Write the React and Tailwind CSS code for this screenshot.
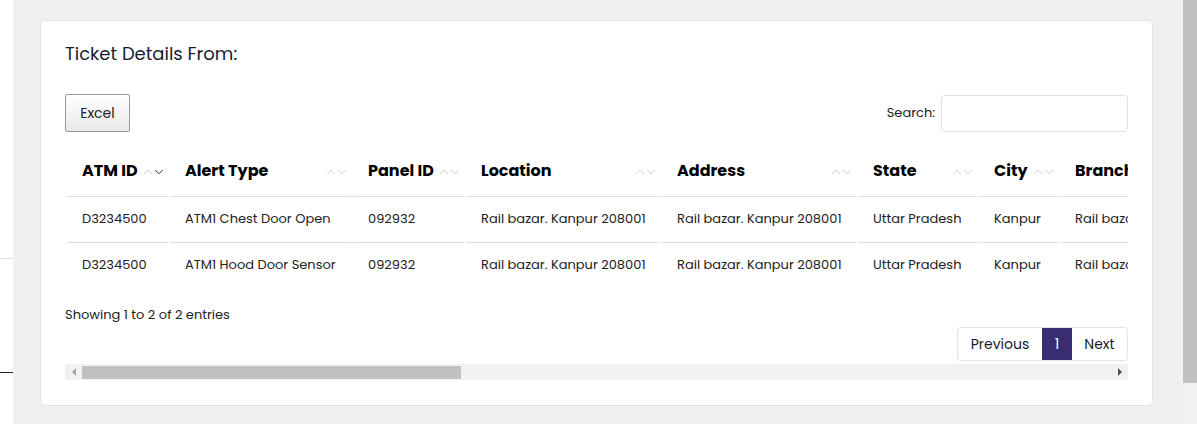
import { ChevronUp, ChevronDown } from 'lucide-react';

const columns = [
  { label: 'ATM ID', width: 'w-[101px]', active: true },
  { label: 'Alert Type', width: 'w-[181px]' },
  { label: 'Panel ID', width: 'w-[111px]' },
  { label: 'Location', width: 'w-[194px]' },
  { label: 'Address', width: 'w-[194px]' },
  { label: 'State', width: 'w-[119px]' },
  { label: 'City', width: 'w-[79px]' },
  { label: 'Branch', width: 'w-[200px]' },
];

const rows = [
  ['D3234500', 'ATM1 Chest Door Open', '092932', 'Rail bazar. Kanpur 208001', 'Rail bazar. Kanpur 208001', 'Uttar Pradesh', 'Kanpur', 'Rail bazar. Kanpur 208001'],
  ['D3234500', 'ATM1 Hood Door Sensor', '092932', 'Rail bazar. Kanpur 208001', 'Rail bazar. Kanpur 208001', 'Uttar Pradesh', 'Kanpur', 'Rail bazar. Kanpur 208001'],
];

const SortIcon = ({ active }) => (
  <span className="absolute right-[2px] top-[15px] flex items-center">
    <ChevronUp className="h-[14px] w-[14px] text-[#c8c8c8]" strokeWidth={1.6} />
    <ChevronDown
      className={`-ml-[3px] h-[14px] w-[14px] ${active ? 'text-[#222]' : 'text-[#c8c8c8]'}`}
      strokeWidth={1.6}
    />
  </span>
);

const App = () => {
  return (
    <div
      className="flex h-[424px] w-[1197px] overflow-hidden bg-[#f0f0f0] text-[#1a1a2e]"
      style={{ fontFamily: 'Poppins, "Open Sans", sans-serif' }}
    >
      {/* Sidebar edge */}
      <div className="flex w-[13px] shrink-0 flex-col bg-white">
        <div className="h-[258px]" />
        <div className="h-px bg-[#e0def0]" />
        <div className="h-[113px]" />
        <div className="h-px bg-[#1e1e3c]" />
      </div>

      {/* Main content */}
      <main className="min-w-0 flex-1 pl-[27px] pr-[30px] pt-[20px]">
        <div className="rounded-[5px] border border-[#e3e1ef] bg-white px-6 pb-[25px] pt-[19px]">
          <h2 className="text-[18px] leading-[28px] text-[#1a1a2e]">Ticket Details From:</h2>

          <div className="mt-[26px] flex items-center justify-between">
            <button className="h-[38px] w-[65px] rounded-[2px] border border-[#999] bg-gradient-to-b from-white to-[#e9e9e9] text-[14px] text-[#222]">
              Excel
            </button>
            <label className="flex items-center gap-[6px] text-[13px] text-[#222]">
              Search:
              <input className="h-[37px] w-[187px] rounded-[4px] border border-[#e0def0] outline-none" />
            </label>
          </div>

          {/* Scroll area */}
          <div className="mt-[18px] overflow-hidden">
            <table className="w-[1197px] table-fixed border-separate border-spacing-x-[2px] border-spacing-y-0">
              <thead>
                <tr>
                  {columns.map((c) => (
                    <th
                      key={c.label}
                      className={`relative ${c.width} whitespace-nowrap border-b border-[#dcdaf0] pb-[13px] pl-[15px] pt-[9px] text-left align-top text-[16px] font-bold leading-[24px] text-black`}
                    >
                      {c.label}
                      {c.label !== 'Branch' && <SortIcon active={c.active} />}
                    </th>
                  ))}
                </tr>
              </thead>
              <tbody>
                {rows.map((r, i) => (
                  <tr key={i}>
                    {r.map((cell, j) => (
                      <td
                        key={j}
                        className={`overflow-hidden whitespace-nowrap pb-[13px] pl-[15px] pt-[11px] text-[13px] leading-[21px] text-[#222] ${
                          i === 0 ? 'border-b border-[#dcdaf0]' : ''
                        }`}
                      >
                        {cell}
                      </td>
                    ))}
                  </tr>
                ))}
              </tbody>
            </table>

            <div className="mt-[17px] text-[13px] leading-[20px] text-[#222]">Showing 1 to 2 of 2 entries</div>

            <div className="mt-[2px] flex justify-end">
              <div className="flex h-[34px] overflow-hidden rounded-[4px] border border-[#e3e1ef] text-[14px] text-[#1a1a2e]">
                <button className="w-[84px]">Previous</button>
                <button className="w-[30px] bg-[#392c70] text-white">1</button>
                <button className="w-[55px]">Next</button>
              </div>
            </div>

            {/* Horizontal scrollbar */}
            <div className="mt-[3px] flex h-[16px] items-center bg-[#f1f1f1]">
              <div className="flex w-[17px] justify-center">
                <span className="h-0 w-0 border-y-[4px] border-r-[4px] border-y-transparent border-r-[#a3a3a3]" />
              </div>
              <div className="h-[13px] w-[379px] bg-[#c1c1c1]" />
              <div className="flex-1" />
              <div className="flex w-[17px] justify-center">
                <span className="h-0 w-0 border-y-[4px] border-l-[4px] border-y-transparent border-l-[#505050]" />
              </div>
            </div>
          </div>
        </div>
      </main>

      {/* Vertical scrollbar */}
      <div className="flex w-[14px] shrink-0 flex-col bg-[#f1f1f1]">
        <div className="h-[383px] bg-[#c1c1c1]" />
      </div>
    </div>
  );
};

export default App;
